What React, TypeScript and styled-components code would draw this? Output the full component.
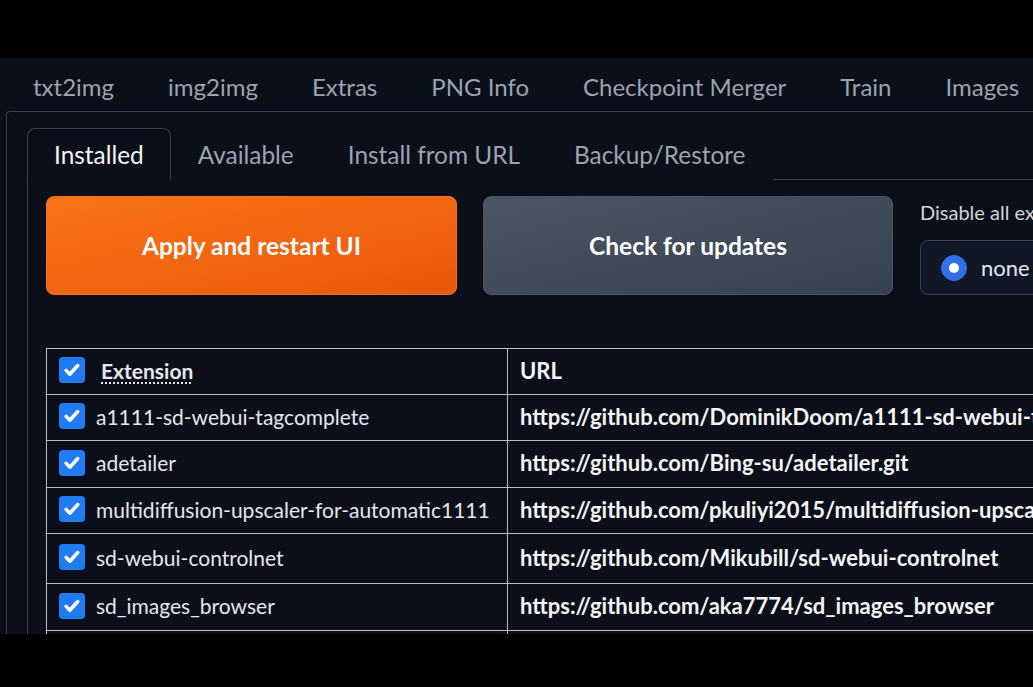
import React from "react";
import styled, { createGlobalStyle } from "styled-components";

const GlobalStyle = createGlobalStyle`
  html, body {
    margin: 0;
    padding: 0;
    background: #000;
  }
  body {
    font-family: Lato, "Noto Sans", sans-serif;
  }
`;

const Frame = styled.div`
  width: 1033px;
  height: 687px;
  display: flex;
  flex-direction: column;
  background: #000;
  overflow: hidden;
`;

const Letterbox = styled.div<{ $h: number }>`
  flex: none;
  height: ${(p) => p.$h}px;
  background: #000;
`;

const Screen = styled.div`
  flex: none;
  height: 576px;
  width: 1500px;
  background: #0b0f19;
  overflow: hidden;
  padding-left: 6px;
  box-sizing: border-box;
`;

const TopTabs = styled.div`
  display: flex;
  height: 53px;
  box-sizing: border-box;
  padding-top: 17px;
`;

const TopTab = styled.div`
  padding: 0 27px;
  font-size: 24px;
  line-height: 24px;
  color: #9ca3af;
  white-space: nowrap;
`;

const OuterPanel = styled.div`
  border-top: 1px solid #374151;
  border-left: 1px solid #374151;
  border-top-left-radius: 4px;
  padding: 16px 0 0 20px;
`;

const SubTabs = styled.div`
  display: flex;
  position: relative;
  z-index: 1;
  margin-bottom: -1px;
`;

const SubTab = styled.div<{ $active?: boolean }>`
  height: 52px;
  box-sizing: border-box;
  padding: 14px 26px 0 26px;
  font-size: 24.4px;
  line-height: 24px;
  white-space: nowrap;
  color: ${(p) => (p.$active ? "#f3f4f6" : "#9ca3af")};
  border: 1px solid ${(p) => (p.$active ? "#374151" : "transparent")};
  border-bottom: 1px solid ${(p) => (p.$active ? "#0b0f19" : "transparent")};
  border-radius: 8px 8px 0 0;
  background: #0b0f19;
`;

const InnerPanel = styled.div`
  border-top: 1px solid #374151;
  border-left: 1px solid #374151;
  padding: 16px 0 0 18px;
`;

const ButtonRow = styled.div`
  display: flex;
  align-items: flex-start;
  gap: 26px;
`;

const BigButton = styled.button<{ $variant: "primary" | "secondary"; $w: number }>`
  width: ${(p) => p.$w}px;
  height: 99px;
  flex: none;
  border-radius: 8px;
  font-family: Lato, "Noto Sans", sans-serif;
  font-size: 24.5px;
  font-weight: 700;
  color: #fff;
  cursor: pointer;
  border: 1px solid ${(p) => (p.$variant === "primary" ? "#f97316" : "#4b5563")};
  background: ${(p) =>
    p.$variant === "primary"
      ? "linear-gradient(to bottom right, #f97316, #ea580c)"
      : "linear-gradient(to bottom right, #4b5563, #374151)"};
`;

const RadioBlock = styled.div`
  margin-left: 1px;
  display: flex;
  flex-direction: column;
`;

const RadioLabel = styled.div`
  font-size: 20px;
  line-height: 24px;
  color: #d1d5db;
  padding-top: 4px;
  height: 44px;
  box-sizing: border-box;
  white-space: nowrap;
`;

const RadioGroup = styled.div`
  display: flex;
  align-items: center;
  gap: 40px;
  height: 55px;
  box-sizing: border-box;
  padding: 0 20px;
  border: 1px solid #374151;
  border-radius: 8px;
  background: #111726;
`;

const RadioOption = styled.label`
  display: flex;
  align-items: center;
  gap: 14px;
  font-size: 22px;
  color: #e5e7eb;
`;

const RadioDot = styled.span<{ $checked?: boolean }>`
  width: 26px;
  height: 26px;
  border-radius: 50%;
  box-sizing: border-box;
  background: ${(p) => (p.$checked ? "#3070e3" : "#1f2937")};
  border: 1px solid ${(p) => (p.$checked ? "#3070e3" : "#4b5563")};
  display: flex;
  align-items: center;
  justify-content: center;
  &::after {
    content: "";
    width: 10px;
    height: 10px;
    border-radius: 50%;
    background: ${(p) => (p.$checked ? "#fff" : "transparent")};
  }
`;

const Table = styled.table`
  margin-top: 53px;
  border-collapse: collapse;
  color: #e5e7eb;
`;

const Row = styled.tr<{ $h: number }>`
  height: ${(p) => p.$h}px;
`;

const Cell = styled.td<{ $w?: number; $bold?: boolean }>`
  ${(p) => (p.$w ? `width: ${p.$w}px;` : "")}
  border: 1px solid #bdbdbd;
  padding: 0 12px 3px 12px;
  font-size: ${(p) => (p.$bold ? 22 : 21)}px;
  font-weight: ${(p) => (p.$bold ? 700 : 400)};
  color: ${(p) => (p.$bold ? "#f5f5f5" : "#e5e7eb")};
  white-space: nowrap;
  vertical-align: middle;
`;

const NameWrap = styled.div<{ $gap: number }>`
  display: flex;
  align-items: center;
  gap: ${(p) => p.$gap}px;
`;

const Box = styled.span`
  width: 26px;
  height: 26px;
  flex: none;
  border-radius: 4px;
  background: #1f7cf5;
  display: flex;
  align-items: center;
  justify-content: center;
`;

const HeaderText = styled.span`
  font-size: 21px;
  font-weight: 700;
  text-decoration: underline dotted;
  text-underline-offset: 4px;
  text-decoration-thickness: 2px;
`;

function Check() {
  return (
    <Box>
      <svg width="20" height="20" viewBox="0 0 16 16" fill="none">
        <path
          d="M3.3 8.3l3 3.1 6.3-7"
          stroke="#fff"
          strokeWidth="2.8"
          strokeLinecap="round"
          strokeLinejoin="round"
        />
      </svg>
    </Box>
  );
}

const extensions = [
  { name: "a1111-sd-webui-tagcomplete", url: "https://github.com/DominikDoom/a1111-sd-webui-tagcomplete", h: 46 },
  { name: "adetailer", url: "https://github.com/Bing-su/adetailer.git", h: 47 },
  { name: "multidiffusion-upscaler-for-automatic1111", url: "https://github.com/pkuliyi2015/multidiffusion-upscaler-for-automatic1111", h: 46 },
  { name: "sd-webui-controlnet", url: "https://github.com/Mikubill/sd-webui-controlnet", h: 50 },
  { name: "sd_images_browser", url: "https://github.com/aka7774/sd_images_browser", h: 47 },
  { name: "sd-webui-additional-networks", url: "https://github.com/kohya-ss/sd-webui-additional-networks", h: 46 },
];

const topTabs = ["txt2img", "img2img", "Extras", "PNG Info", "Checkpoint Merger", "Train", "Images", "Settings", "Extensions"];
const subTabs = ["Installed", "Available", "Install from URL", "Backup/Restore"];

export default function App() {
  return (
    <>
      <GlobalStyle />
      <Frame>
        <Letterbox $h={58} />
        <Screen>
          <TopTabs>
            {topTabs.map((t) => (
              <TopTab key={t}>{t}</TopTab>
            ))}
          </TopTabs>
          <OuterPanel>
            <SubTabs>
              {subTabs.map((t, i) => (
                <SubTab key={t} $active={i === 0}>
                  {t}
                </SubTab>
              ))}
            </SubTabs>
            <InnerPanel>
              <ButtonRow>
                <BigButton $variant="primary" $w={411}>
                  Apply and restart UI
                </BigButton>
                <BigButton $variant="secondary" $w={410}>
                  Check for updates
                </BigButton>
                <RadioBlock>
                  <RadioLabel>Disable all extensions</RadioLabel>
                  <RadioGroup>
                    <RadioOption>
                      <RadioDot $checked />
                      none
                    </RadioOption>
                    <RadioOption>
                      <RadioDot />
                      extra
                    </RadioOption>
                    <RadioOption>
                      <RadioDot />
                      all
                    </RadioOption>
                  </RadioGroup>
                </RadioBlock>
              </ButtonRow>
              <Table>
                <tbody>
                  <Row $h={46}>
                    <Cell $w={436}>
                      <NameWrap $gap={16}>
                        <Check />
                        <HeaderText>Extension</HeaderText>
                      </NameWrap>
                    </Cell>
                    <Cell $w={700} $bold>
                      URL
                    </Cell>
                  </Row>
                  {extensions.map((e) => (
                    <Row key={e.name} $h={e.h}>
                      <Cell>
                        <NameWrap $gap={11}>
                          <Check />
                          {e.name}
                        </NameWrap>
                      </Cell>
                      <Cell $bold>{e.url}</Cell>
                    </Row>
                  ))}
                </tbody>
              </Table>
            </InnerPanel>
          </OuterPanel>
        </Screen>
        <Letterbox $h={53} />
      </Frame>
    </>
  );
}
